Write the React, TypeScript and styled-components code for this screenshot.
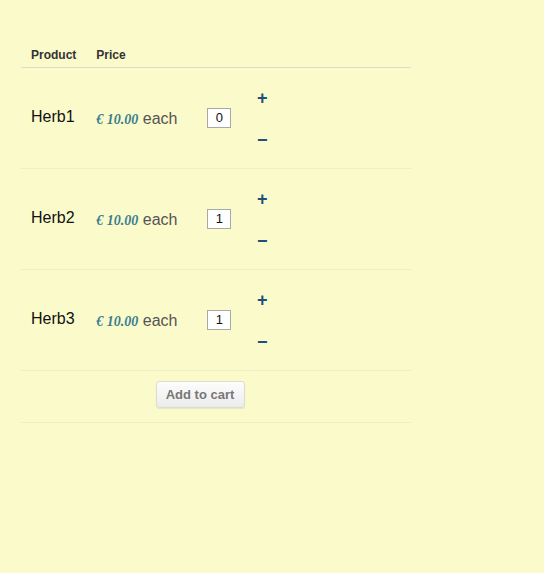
import styled, { createGlobalStyle } from "styled-components";

const GlobalStyle = createGlobalStyle`
  html, body {
    margin: 0;
    background: #fbfacb;
    font-family: "Liberation Sans", Arial, sans-serif;
  }
`;

const Page = styled.div`
  padding: 43px 0 0 21px;
  min-height: 573px;
  box-sizing: border-box;
`;

const Table = styled.table`
  width: 390px;
  border-collapse: collapse;
`;

const HeadCell = styled.th`
  text-align: left;
  font-size: 12px;
  font-weight: bold;
  color: #333;
  padding: 5px 10px 5px;
  height: 13px;
  border-bottom: 1px solid #d9dccb;
`;

const Row = styled.tr`
  height: 101px;
  border-bottom: 1px solid #efeec4;
`;

const Cell = styled.td`
  padding: 0 10px;
  vertical-align: middle;
`;

const Name = styled(Cell)`
  font-size: 16px;
  color: #111;
  width: 45px;
  padding-bottom: 3px;
`;

const PriceCell = styled(Cell)`
  width: 90px;
  white-space: nowrap;
  font-size: 16px;
  color: #555;
  padding-top: 2px;
`;

const Amount = styled.span`
  font-family: "Liberation Serif", "Times New Roman", serif;
  font-style: italic;
  font-weight: bold;
  font-size: 14px;
  color: #3a7f8e;
`;

const QtyCell = styled(Cell)`
  width: 26px;
  text-align: center;
`;

const Qty = styled.div`
  display: inline-block;
  width: 22px;
  height: 18px;
  border: 1px solid #a9a9a9;
  background: #fff;
  font-size: 13px;
  line-height: 18px;
  text-align: center;
  color: #111;
`;

const Stepper = styled.div`
  display: flex;
  flex-direction: column;
  align-items: center;
  width: 16px;
  gap: 20px;
  padding: 2px 0 0 2px;
`;

const StepButton = styled.span`
  font-size: 18px;
  font-weight: bold;
  line-height: 22px;
  color: #1d4f7b;
`;

const ButtonRow = styled.tr`
  height: 52px;
  border-bottom: 1px solid #efeec4;
`;

const ButtonCell = styled.td`
  text-align: center;
  padding: 0 32px 5px 0;
`;

const CartButton = styled.button`
  font-family: "Liberation Sans", Arial, sans-serif;
  font-size: 13px;
  font-weight: bold;
  color: #777;
  width: 89px;
  height: 27px;
  border: 1px solid #dcdcd0;
  border-radius: 3px;
  background: linear-gradient(#fdfdfd, #ececec);
  box-shadow: 0 1px 1px rgba(0, 0, 0, 0.08);
`;

const items = [
  { name: "Herb1", qty: 0 },
  { name: "Herb2", qty: 1 },
  { name: "Herb3", qty: 1 },
];

const App = () => (
  <>
    <GlobalStyle />
    <Page>
      <Table>
        <thead>
          <tr>
            <HeadCell>Product</HeadCell>
            <HeadCell>Price</HeadCell>
            <HeadCell />
            <HeadCell />
          </tr>
        </thead>
        <tbody>
          {items.map((item) => (
            <Row key={item.name}>
              <Name>{item.name}</Name>
              <PriceCell>
                <Amount>€ 10.00</Amount> each
              </PriceCell>
              <QtyCell>
                <Qty>{item.qty}</Qty>
              </QtyCell>
              <Cell>
                <Stepper>
                  <StepButton>+</StepButton>
                  <StepButton>−</StepButton>
                </Stepper>
              </Cell>
            </Row>
          ))}
          <ButtonRow>
            <ButtonCell colSpan={4}>
              <CartButton>Add to cart</CartButton>
            </ButtonCell>
          </ButtonRow>
        </tbody>
      </Table>
    </Page>
  </>
);

export default App;
